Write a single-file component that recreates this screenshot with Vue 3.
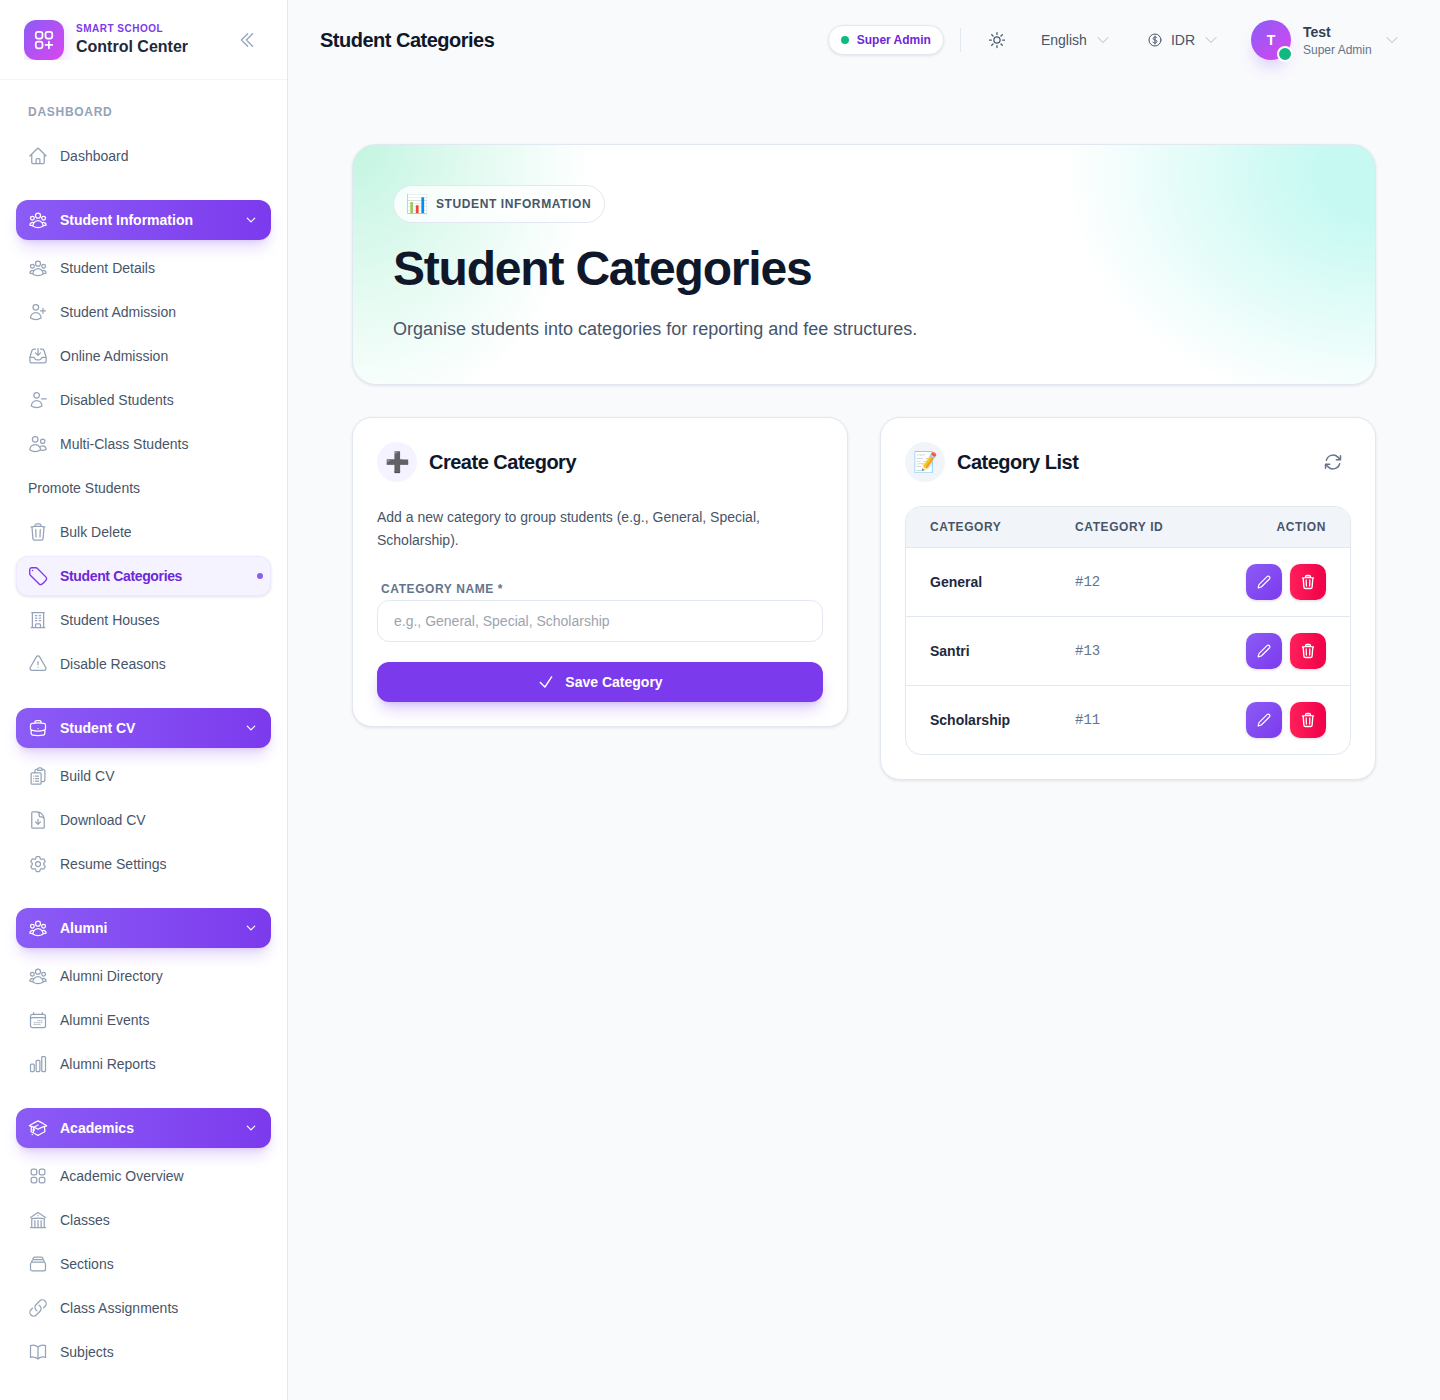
<script setup>
const P = {
  home: 'm2.25 12 8.954-8.955c.44-.439 1.152-.439 1.591 0L21.75 12M4.5 9.75v10.125c0 .621.504 1.125 1.125 1.125H9.75v-4.875c0-.621.504-1.125 1.125-1.125h2.25c.621 0 1.125.504 1.125 1.125V21h4.125c.621 0 1.125-.504 1.125-1.125V9.75M8.25 21h8.25',
  group: 'M18 18.72a9.094 9.094 0 0 0 3.741-.479 3 3 0 0 0-4.682-2.72m.94 3.198.001.031c0 .225-.012.447-.037.666A11.944 11.944 0 0 1 12 21c-2.17 0-4.207-.576-5.963-1.584A6.062 6.062 0 0 1 6 18.719m12 0a5.971 5.971 0 0 0-.941-3.197m0 0A5.995 5.995 0 0 0 12 12.75a5.995 5.995 0 0 0-5.058 2.772m0 0a3 3 0 0 0-4.681 2.72 8.986 8.986 0 0 0 3.74.477m.94-3.197a5.971 5.971 0 0 0-.94 3.197M15 6.75a3 3 0 1 1-6 0 3 3 0 0 1 6 0Zm6 3a2.25 2.25 0 1 1-4.5 0 2.25 2.25 0 0 1 4.5 0Zm-13.5 0a2.25 2.25 0 1 1-4.5 0 2.25 2.25 0 0 1 4.5 0Z',
  userPlus: 'M18 7.5v3m0 0v3m0-3h3m-3 0h-3m-2.25-4.125a3.375 3.375 0 1 1-6.75 0 3.375 3.375 0 0 1 6.75 0ZM3 19.235v-.11a6.375 6.375 0 0 1 12.75 0v.109A12.318 12.318 0 0 1 9.374 21c-2.331 0-4.512-.645-6.374-1.766Z',
  userMinus: 'M22 10.5h-6m-2.25-4.125a3.375 3.375 0 1 1-6.75 0 3.375 3.375 0 0 1 6.75 0ZM4 19.235v-.11a6.375 6.375 0 0 1 12.75 0v.109A12.318 12.318 0 0 1 10.374 21c-2.331 0-4.512-.645-6.374-1.766Z',
  users: 'M15 19.128a9.38 9.38 0 0 0 2.625.372 9.337 9.337 0 0 0 4.121-.952 4.125 4.125 0 0 0-7.533-2.493M15 19.128v-.003c0-1.113-.285-2.16-.786-3.07M15 19.128v.106A12.318 12.318 0 0 1 8.624 21c-2.331 0-4.512-.645-6.374-1.766l-.001-.109a6.375 6.375 0 0 1 11.964-3.07M12 6.375a3.375 3.375 0 1 1-6.75 0 3.375 3.375 0 0 1 6.75 0Zm8.25 2.25a2.625 2.625 0 1 1-5.25 0 2.625 2.625 0 0 1 5.25 0Z',
  inbox: 'M9 3.75H6.912a2.25 2.25 0 0 0-2.15 1.588L2.35 13.177a2.25 2.25 0 0 0-.1.661V18a2.25 2.25 0 0 0 2.25 2.25h15A2.25 2.25 0 0 0 21.75 18v-4.162c0-.224-.034-.447-.1-.661L19.24 5.338a2.25 2.25 0 0 0-2.15-1.588H15M2.25 13.5h3.86a2.25 2.25 0 0 1 2.012 1.244l.256.512a2.25 2.25 0 0 0 2.013 1.244h3.218a2.25 2.25 0 0 0 2.013-1.244l.256-.512a2.25 2.25 0 0 1 2.013-1.244h3.859M12 3v8.25m0 0-3-3m3 3 3-3',
  trash: 'm14.74 9-.346 9m-4.788 0L9.26 9m9.968-3.21c.342.052.682.107 1.022.166m-1.022-.165L18.16 19.673a2.25 2.25 0 0 1-2.244 2.077H8.084a2.25 2.25 0 0 1-2.244-2.077L4.772 5.79m14.456 0a48.108 48.108 0 0 0-3.478-.397m-12 .562c.34-.059.68-.114 1.022-.165m0 0a48.11 48.11 0 0 1 3.478-.397m7.5 0v-.916c0-1.18-.91-2.164-2.09-2.201a51.964 51.964 0 0 0-3.32 0c-1.18.037-2.09 1.022-2.09 2.201v.916m7.5 0a48.667 48.667 0 0 0-7.5 0',
  tag: 'M9.568 3H5.25A2.25 2.25 0 0 0 3 5.25v4.318c0 .597.237 1.17.659 1.591l9.581 9.581c.699.699 1.78.872 2.607.33a18.095 18.095 0 0 0 5.223-5.223c.542-.827.369-1.908-.33-2.607L11.16 3.66A2.25 2.25 0 0 0 9.568 3Z M6 6h.008v.008H6V6Z',
  building: 'M3.75 21h16.5M4.5 3h15M5.25 3v18m13.5-18v18M9 6.75h1.5m-1.5 3h1.5m-1.5 3h1.5m3-6H15m-1.5 3H15m-1.5 3H15M9 21v-3.375c0-.621.504-1.125 1.125-1.125h3.75c.621 0 1.125.504 1.125 1.125V21',
  warn: 'M12 9v3.75m-9.303 3.376c-.866 1.5.217 3.374 1.948 3.374h14.71c1.73 0 2.813-1.874 1.948-3.374L13.949 3.378c-.866-1.5-3.032-1.5-3.898 0L2.697 16.126ZM12 15.75h.007v.008H12v-.008Z',
  case: 'M20.25 14.15v4.25c0 1.094-.787 2.036-1.872 2.18-2.087.277-4.216.42-6.378.42s-4.291-.143-6.378-.42c-1.085-.144-1.872-1.086-1.872-2.18v-4.25m16.5 0a2.18 2.18 0 0 0 .75-1.661V8.706c0-1.081-.768-2.015-1.837-2.175a48.114 48.114 0 0 0-3.413-.387m4.5 8.006c-.194.165-.42.295-.673.38A23.978 23.978 0 0 1 12 15.75c-2.648 0-5.195-.429-7.577-1.22a2.016 2.016 0 0 1-.673-.38m0 0A2.18 2.18 0 0 1 3 12.489V8.706c0-1.081.768-2.015 1.837-2.175a48.111 48.111 0 0 1 3.413-.387m7.5 0V5.25A2.25 2.25 0 0 0 13.5 3h-3a2.25 2.25 0 0 0-2.25 2.25v.894m7.5 0a48.667 48.667 0 0 0-7.5 0M12 12.75h.008v.008H12v-.008Z',
  clip: 'M9 12h3.75M9 15h3.75M9 18h3.75m3 .75H18a2.25 2.25 0 0 0 2.25-2.25V6.108c0-1.135-.845-2.098-1.976-2.192a48.424 48.424 0 0 0-1.123-.08m-5.801 0c-.065.21-.1.433-.1.664 0 .414.336.75.75.75h4.5a.75.75 0 0 0 .75-.75 2.25 2.25 0 0 0-.1-.664m-5.8 0A2.251 2.251 0 0 1 13.5 2.25H15c1.012 0 1.867.668 2.15 1.586m-5.8 0c-.376.023-.75.05-1.124.08C9.095 4.01 8.25 4.973 8.25 6.108V8.25m0 0H4.875c-.621 0-1.125.504-1.125 1.125v11.25c0 .621.504 1.125 1.125 1.125h9.75c.621 0 1.125-.504 1.125-1.125V9.375c0-.621-.504-1.125-1.125-1.125H8.25ZM6.75 12h.008v.008H6.75V12Zm0 3h.008v.008H6.75V15Zm0 3h.008v.008H6.75V18Z',
  docDown: 'M19.5 14.25v-2.625a3.375 3.375 0 0 0-3.375-3.375h-1.5A1.125 1.125 0 0 1 13.5 7.125v-1.5a3.375 3.375 0 0 0-3.375-3.375H8.25m.75 12 3 3m0 0 3-3m-3 3v-6m-1.5-9H5.625c-.621 0-1.125.504-1.125 1.125v17.25c0 .621.504 1.125 1.125 1.125h12.75c.621 0 1.125-.504 1.125-1.125V11.25a9 9 0 0 0-9-9Z',
  cog: 'M9.594 3.94c.09-.542.56-.94 1.11-.94h2.593c.55 0 1.02.398 1.11.94l.213 1.281c.063.374.313.686.645.87.074.04.147.083.22.127.325.196.72.257 1.075.124l1.217-.456a1.125 1.125 0 0 1 1.37.49l1.296 2.247a1.125 1.125 0 0 1-.26 1.431l-1.003.827c-.293.241-.438.613-.43.992a7.723 7.723 0 0 1 0 .255c-.008.378.137.75.43.991l1.004.827c.424.35.534.955.26 1.43l-1.298 2.247a1.125 1.125 0 0 1-1.369.491l-1.217-.456c-.355-.133-.75-.072-1.076.124a6.47 6.47 0 0 1-.22.128c-.331.183-.581.495-.644.869l-.213 1.281c-.09.543-.56.94-1.11.94h-2.594c-.55 0-1.019-.398-1.11-.94l-.213-1.281c-.062-.374-.312-.686-.644-.87a6.52 6.52 0 0 1-.22-.127c-.325-.196-.72-.257-1.076-.124l-1.217.456a1.125 1.125 0 0 1-1.369-.49l-1.297-2.247a1.125 1.125 0 0 1 .26-1.431l1.004-.827c.292-.24.437-.613.43-.991a6.932 6.932 0 0 1 0-.255c.007-.38-.138-.751-.43-.992l-1.004-.827a1.125 1.125 0 0 1-.26-1.43l1.297-2.247a1.125 1.125 0 0 1 1.37-.491l1.216.456c.356.133.751.072 1.076-.124.072-.044.146-.086.22-.128.332-.183.582-.495.644-.869l.214-1.28Z M15 12a3 3 0 1 1-6 0 3 3 0 0 1 6 0Z',
  cal: 'M6.75 3v2.25M17.25 3v2.25M3 18.75V7.5a2.25 2.25 0 0 1 2.25-2.25h13.5A2.25 2.25 0 0 1 21 7.5v11.25m-18 0A2.25 2.25 0 0 0 5.25 21h13.5A2.25 2.25 0 0 0 21 18.75m-18 0v-7.5A2.25 2.25 0 0 1 5.25 9h13.5A2.25 2.25 0 0 1 21 11.25v7.5m-9-6h.008v.008H12v-.008ZM12 15h.008v.008H12V15Zm0 2.25h.008v.008H12v-.008ZM9.75 15h.008v.008H9.75V15Zm0 2.25h.008v.008H9.75v-.008ZM7.5 15h.008v.008H7.5V15Zm0 2.25h.008v.008H7.5v-.008Zm6.75-4.5h.008v.008h-.008v-.008Zm0 2.25h.008v.008h-.008V15Zm0 2.25h.008v.008h-.008v-.008Zm2.25-4.5h.008v.008H16.5v-.008Zm0 2.25h.008v.008H16.5V15Z',
  bars: 'M3 13.125C3 12.504 3.504 12 4.125 12h2.25c.621 0 1.125.504 1.125 1.125v6.75C7.5 20.496 6.996 21 6.375 21h-2.25A1.125 1.125 0 0 1 3 19.875v-6.75ZM9.75 8.625c0-.621.504-1.125 1.125-1.125h2.25c.621 0 1.125.504 1.125 1.125v11.25c0 .621-.504 1.125-1.125 1.125h-2.25a1.125 1.125 0 0 1-1.125-1.125V8.625ZM16.5 4.125c0-.621.504-1.125 1.125-1.125h2.25C20.496 3 21 3.504 21 4.125v15.75c0 .621-.504 1.125-1.125 1.125h-2.25a1.125 1.125 0 0 1-1.125-1.125V4.125Z',
  cap: 'M4.26 10.147a60.438 60.438 0 0 0-.491 6.347A48.62 48.62 0 0 1 12 20.904a48.62 48.62 0 0 1 8.232-4.41 60.46 60.46 0 0 0-.491-6.347m-15.482 0a50.636 50.636 0 0 0-2.658-.813A59.906 59.906 0 0 1 12 3.493a59.903 59.903 0 0 1 10.399 5.84c-.896.248-1.783.52-2.658.814m-15.482 0A50.717 50.717 0 0 1 12 13.489a50.702 50.702 0 0 1 7.74-3.342M6.75 15a.75.75 0 1 0 0-1.5.75.75 0 0 0 0 1.5Zm0 0v-3.675A55.378 55.378 0 0 1 12 8.443m-7.007 11.55A5.981 5.981 0 0 0 6.75 15.75v-1.5',
  grid: 'M3.75 6A2.25 2.25 0 0 1 6 3.75h2.25A2.25 2.25 0 0 1 10.5 6v2.25a2.25 2.25 0 0 1-2.25 2.25H6a2.25 2.25 0 0 1-2.25-2.25V6ZM3.75 15.75A2.25 2.25 0 0 1 6 13.5h2.25a2.25 2.25 0 0 1 2.25 2.25V18a2.25 2.25 0 0 1-2.25 2.25H6A2.25 2.25 0 0 1 3.75 18v-2.25ZM13.5 6a2.25 2.25 0 0 1 2.25-2.25H18A2.25 2.25 0 0 1 20.25 6v2.25A2.25 2.25 0 0 1 18 10.5h-2.25a2.25 2.25 0 0 1-2.25-2.25V6ZM13.5 15.75a2.25 2.25 0 0 1 2.25-2.25H18a2.25 2.25 0 0 1 2.25 2.25V18A2.25 2.25 0 0 1 18 20.25h-2.25A2.25 2.25 0 0 1 13.5 18v-2.25Z',
  squaresPlus: 'M13.5 16.875h3.375m0 0h3.375m-3.375 0V13.5m0 3.375v3.375M6 10.5h2.25a2.25 2.25 0 0 0 2.25-2.25V6a2.25 2.25 0 0 0-2.25-2.25H6A2.25 2.25 0 0 0 3.75 6v2.25A2.25 2.25 0 0 0 6 10.5Zm0 9.75h2.25A2.25 2.25 0 0 0 10.5 18v-2.25a2.25 2.25 0 0 0-2.25-2.25H6a2.25 2.25 0 0 0-2.25 2.25V18A2.25 2.25 0 0 0 6 20.25Zm9.75-9.75H18a2.25 2.25 0 0 0 2.25-2.25V6A2.25 2.25 0 0 0 18 3.75h-2.25A2.25 2.25 0 0 0 13.5 6v2.25a2.25 2.25 0 0 0 2.25 2.25Z',
  library: 'M12 21v-8.25M15.75 21v-8.25M8.25 21v-8.25M3 9l9-6 9 6m-1.5 12V10.332A48.36 48.36 0 0 0 12 9.75c-2.551 0-5.056.2-7.5.582V21M3 21h18M12 6.75h.008v.008H12V6.75Z',
  stack: 'M6 6.878V6a2.25 2.25 0 0 1 2.25-2.25h7.5A2.25 2.25 0 0 1 18 6v.878m-12 0c.235-.083.487-.128.75-.128h10.5c.263 0 .515.045.75.128m-12 0A2.25 2.25 0 0 0 4.5 9v.878m13.5-3A2.25 2.25 0 0 1 19.5 9v.878m0 0a2.246 2.246 0 0 0-.75-.128H5.25c-.263 0-.515.045-.75.128m15 0A2.25 2.25 0 0 1 21 12v6a2.25 2.25 0 0 1-2.25 2.25H5.25A2.25 2.25 0 0 1 3 18v-6c0-.98.626-1.813 1.5-2.122',
  link: 'M13.19 8.688a4.5 4.5 0 0 1 1.242 7.244l-4.5 4.5a4.5 4.5 0 0 1-6.364-6.364l1.757-1.757m13.35-.622 1.757-1.757a4.5 4.5 0 0 0-6.364-6.364l-4.5 4.5a4.5 4.5 0 0 0 1.242 7.244',
  book: 'M12 6.042A8.967 8.967 0 0 0 6 3.75c-1.052 0-2.062.18-3 .512v14.25A8.987 8.987 0 0 1 6 18c2.305 0 4.408.867 6 2.292m0-14.25a8.966 8.966 0 0 1 6-2.292c1.052 0 2.062.18 3 .512v14.25A8.987 8.987 0 0 0 18 18a8.967 8.967 0 0 0-6 2.292m0-14.25v14.25',
  sun: 'M12 3v2.25m6.364.386-1.591 1.591M21 12h-2.25m-.386 6.364-1.591-1.591M12 18.75V21m-4.773-4.227-1.591 1.591M5.25 12H3m4.227-4.773L5.636 5.636M15.75 12a3.75 3.75 0 1 1-7.5 0 3.75 3.75 0 0 1 7.5 0Z',
  dollar: 'M12 6v12m-3-2.818.879.659c1.171.879 3.07.879 4.242 0 1.172-.879 1.172-2.303 0-3.182C13.536 12.219 12.768 12 12 12c-.725 0-1.45-.22-2.003-.659-1.106-.879-1.106-2.303 0-3.182s2.9-.879 4.006 0l.415.33M21 12a9 9 0 1 1-18 0 9 9 0 0 1 18 0Z',
  chev: 'm19.5 8.25-7.5 7.5-7.5-7.5',
  dbl: 'm18.75 4.5-7.5 7.5 7.5 7.5m-6-15L5.25 12l7.5 7.5',
  check: 'm4.5 12.75 6 6 9-13.5',
  pencil: 'M21.174 6.812a1 1 0 0 0-3.986-3.987L3.842 16.174a2 2 0 0 0-.5.83l-1.321 4.352a.5.5 0 0 0 .623.622l4.353-1.32a2 2 0 0 0 .83-.497z',
  refresh: 'M16.023 9.348h4.992v-.001M2.985 19.644v-4.992m0 0h4.992m-4.993 0 3.181 3.183a8.25 8.25 0 0 0 13.803-3.7M4.031 9.865a8.25 8.25 0 0 1 13.803-3.7l3.181 3.182m0-4.991v4.99'
}

const groups = [
  { head: 'Student Information', icon: 'group', items: [
    { t: 'Student Details', i: 'group' }, { t: 'Student Admission', i: 'userPlus' }, { t: 'Online Admission', i: 'inbox' },
    { t: 'Disabled Students', i: 'userMinus' }, { t: 'Multi-Class Students', i: 'users' }, { t: 'Promote Students' },
    { t: 'Bulk Delete', i: 'trash' }, { t: 'Student Categories', i: 'tag', active: true }, { t: 'Student Houses', i: 'building' },
    { t: 'Disable Reasons', i: 'warn' } ] },
  { head: 'Student CV', icon: 'case', items: [
    { t: 'Build CV', i: 'clip' }, { t: 'Download CV', i: 'docDown' }, { t: 'Resume Settings', i: 'cog' } ] },
  { head: 'Alumni', icon: 'group', items: [
    { t: 'Alumni Directory', i: 'group' }, { t: 'Alumni Events', i: 'cal' }, { t: 'Alumni Reports', i: 'bars' } ] },
  { head: 'Academics', icon: 'cap', items: [
    { t: 'Academic Overview', i: 'grid' }, { t: 'Classes', i: 'library' }, { t: 'Sections', i: 'stack' },
    { t: 'Class Assignments', i: 'link' }, { t: 'Subjects', i: 'book' } ] }
]
const rows = [
  { name: 'General', id: '#12' },
  { name: 'Santri', id: '#13' },
  { name: 'Scholarship', id: '#11' }
]
</script>

<template>
  <div class="app">
    <aside class="side">
      <div class="brand">
        <div class="logo-clip">
          <div class="logo">
            <svg class="ic24" viewBox="0 0 24 24"><path :d="P.squaresPlus" /></svg>
          </div>
        </div>
        <div class="brand-text">
          <div class="brand-top">SMART SCHOOL</div>
          <div class="brand-name">Control Center</div>
        </div>
        <svg class="collapse" viewBox="0 0 24 24"><path :d="P.dbl" /></svg>
      </div>
      <nav class="nav">
        <div class="sec">DASHBOARD</div>
        <a class="item">
          <svg class="ic" viewBox="0 0 24 24"><path :d="P.home" /></svg>
          <span>Dashboard</span>
        </a>
        <div v-for="g in groups" :key="g.head" class="group">
          <div class="ghead">
            <svg class="ic" viewBox="0 0 24 24"><path :d="P[g.icon]" /></svg>
            <span class="gtitle">{{ g.head }}</span>
            <svg class="gchev" viewBox="0 0 24 24"><path :d="P.chev" /></svg>
          </div>
          <div class="gitems">
            <a v-for="it in g.items" :key="it.t" class="item" :class="{ active: it.active, bare: !it.i }">
              <svg v-if="it.i" class="ic" viewBox="0 0 24 24"><path :d="P[it.i]" /></svg>
              <span>{{ it.t }}</span>
              <i v-if="it.active" class="dot"></i>
            </a>
          </div>
        </div>
      </nav>
    </aside>

    <div class="main">
      <header class="top">
        <h1 class="top-title">Student Categories</h1>
        <div class="top-right">
          <div class="pill"><i class="gdot"></i>Super Admin</div>
          <i class="vline"></i>
          <svg class="sun" viewBox="0 0 24 24"><path :d="P.sun" /></svg>
          <div class="sel lang">English<svg class="tchev" viewBox="0 0 24 24"><path :d="P.chev" /></svg></div>
          <div class="sel cur">
            <svg class="dollar" viewBox="0 0 24 24"><path :d="P.dollar" /></svg>IDR<svg class="tchev" viewBox="0 0 24 24"><path :d="P.chev" /></svg>
          </div>
          <div class="user">
            <div class="avatar">T<i class="online"></i></div>
            <div class="who">
              <div class="who-name">Test</div>
              <div class="who-role">Super Admin</div>
            </div>
            <svg class="tchev uchev" viewBox="0 0 24 24"><path :d="P.chev" /></svg>
          </div>
        </div>
      </header>

      <main class="content">
        <section class="hero">
          <div class="badge"><span class="badge-emoji">📊</span>STUDENT INFORMATION</div>
          <h2 class="hero-title">Student Categories</h2>
          <p class="hero-sub">Organise students into categories for reporting and fee structures.</p>
        </section>

        <div class="cols">
          <section class="card">
            <div class="card-head">
              <div class="circle violet">➕</div>
              <h3>Create Category</h3>
            </div>
            <p class="desc">Add a new category to group students (e.g., General, Special, Scholarship).</p>
            <label class="flabel" for="catname">CATEGORY NAME *</label>
            <input id="catname" class="finput" placeholder="e.g., General, Special, Scholarship" />
            <button class="save" type="button">
              <svg class="savecheck" viewBox="0 0 24 24"><path :d="P.check" /></svg>Save Category
            </button>
          </section>

          <section class="card">
            <div class="card-head">
              <div class="circle slate">📝</div>
              <h3>Category List</h3>
              <svg class="refresh" viewBox="0 0 24 24"><path :d="P.refresh" /></svg>
            </div>
            <div class="tbl">
              <div class="row thead">
                <div class="c1">CATEGORY</div>
                <div class="c2">CATEGORY ID</div>
                <div class="c3">ACTION</div>
              </div>
              <div v-for="r in rows" :key="r.id" class="row tr">
                <div class="c1 name">{{ r.name }}</div>
                <div class="c2 mono">{{ r.id }}</div>
                <div class="c3 acts">
                  <button class="act edit" type="button"><svg viewBox="0 0 24 24"><path :d="P.pencil" /></svg></button>
                  <button class="act del" type="button"><svg viewBox="0 0 24 24"><path :d="P.trash" /></svg></button>
                </div>
              </div>
            </div>
          </section>
        </div>
      </main>
    </div>
  </div>
</template>

<style>
html, body { margin: 0; background: #f8fafc; }
</style>

<style scoped>
.app {
  display: flex;
  height: 1400px;
  overflow: hidden;
  font-family: "Liberation Sans", Arial, sans-serif;
  background: #f9fafc;
}
svg { fill: none; stroke: currentColor; stroke-width: 1.5; stroke-linecap: round; stroke-linejoin: round; flex: none; display: block; }

/* sidebar */
.side { width: 288px; flex: none; box-sizing: border-box; background: #fff; border-right: 1px solid #e2e8f0; }
.brand { height: 80px; box-sizing: border-box; border-bottom: 1px solid #f1f5f9; display: flex; align-items: center; padding: 0 24px; }
.logo-clip { width: 52px; height: 40px; overflow: hidden; flex: none; }
.logo { width: 40px; height: 40px; border-radius: 12px; background: linear-gradient(135deg, #8b5cf6, #d946ef); color: #fff; display: flex; align-items: center; justify-content: center; box-shadow: 0 4px 14px rgba(168, 85, 247, .25); }
.ic24 { width: 24px; height: 24px; stroke-width: 1.75; }
.brand-text { flex: 1; }
.brand-top { font-size: 10px; line-height: 14px; font-weight: 700; letter-spacing: .5px; color: #7c3aed; }
.brand-name { font-size: 16px; line-height: 22px; font-weight: 700; color: #1e293b; }
.collapse { width: 20px; height: 20px; color: #94a3b8; margin-right: 6px; }
.nav { padding: 24px 16px 0; }
.sec { font-size: 12px; line-height: 16px; font-weight: 700; letter-spacing: .72px; color: #94a3b8; padding-left: 12px; margin-bottom: 16px; }
.item { display: flex; align-items: center; height: 40px; padding: 0 12px; gap: 12px; border-radius: 12px; font-size: 14px; color: #475569; box-sizing: border-box; }
.ic { width: 20px; height: 20px; color: #94a3b8; }
.group { margin-top: 24px; }
.ghead { display: flex; align-items: center; height: 40px; padding: 0 12px; gap: 12px; border-radius: 12px; background: linear-gradient(90deg, #8b5cf6, #7c3aed); color: #fff; font-size: 14px; font-weight: 700; box-shadow: 0 10px 15px -3px rgba(124, 58, 237, .2), 0 4px 6px -4px rgba(124, 58, 237, .2); }
.ghead .ic { color: #fff; }
.gtitle { flex: 1; }
.gchev { width: 12px; height: 12px; stroke-width: 2.4; margin-right: 2px; }
.gitems { display: flex; flex-direction: column; gap: 4px; margin-top: 8px; }
.item.active { background: #f5f3ff; color: #6d28d9; font-weight: 700; letter-spacing: -.35px; box-shadow: 0 1px 3px rgba(15, 23, 42, .12); border: 1px solid #ede9fe; padding: 0 11px; }
.item.active .ic { color: #7c3aed; transform: scale(1.1); }
.item.active span { flex: 1; }
.dot { width: 6px; height: 6px; border-radius: 50%; background: #8b5cf6; margin-right: -4px; }

/* top */
.main { flex: 1; min-width: 0; }
.top { height: 80px; box-sizing: border-box; display: flex; align-items: center; justify-content: space-between; padding: 0 32px; }
.top-title { margin: 0; font-size: 20px; line-height: 28px; font-weight: 700; letter-spacing: -.5px; color: #0f172a; }
.top-right { display: flex; align-items: center; }
.pill { display: flex; align-items: center; height: 30px; box-sizing: border-box; padding: 0 12px; gap: 8px; border-radius: 15px; background: #fff; border: 1px solid #e2e8f0; box-shadow: 0 1px 3px rgba(15, 23, 42, .1); font-size: 12px; font-weight: 700; color: #6d28d9; }
.gdot { width: 8px; height: 8px; border-radius: 50%; background: #10b981; }
.vline { width: 1px; height: 24px; background: #e2e8f0; margin: 0 26px 0 16px; }
.sun { width: 20px; height: 20px; color: #475569; }
.sel { display: flex; align-items: center; font-size: 14px; color: #475569; }
.lang { margin-left: 34px; }
.cur { margin-left: 36px; }
.tchev { width: 16px; height: 16px; color: #b0bac9; margin-left: 8px; stroke-width: 1.5; }
.dollar { width: 16px; height: 16px; margin-right: 8px; color: #475569; }
.user { display: flex; align-items: center; margin-left: 32px; }
.avatar { width: 40px; height: 40px; border-radius: 50%; position: relative; background: linear-gradient(135deg, #8b5cf6, #d946ef); color: #fff; display: flex; align-items: center; justify-content: center; font-size: 14px; font-weight: 700; box-shadow: 0 10px 15px -3px rgba(139, 92, 246, .25); }
.online { position: absolute; right: -2px; bottom: -2px; width: 12px; height: 12px; border-radius: 50%; background: #10b981; border: 2px solid #fff; }
.who { margin-left: 12px; width: 74px; }
.who-name { font-size: 14px; line-height: 20px; font-weight: 700; color: #334155; }
.who-role { font-size: 12px; line-height: 16px; color: #64748b; }
.uchev { margin-left: 7px; margin-right: 8px; }

/* content */
.content { padding: 64px 64px 0; }
.hero { box-sizing: border-box; height: 241px; padding: 40px; border: 1px solid #e2e8f0; border-radius: 24px; background:
  radial-gradient(ellipse 240px 280px at 0 0, rgba(110, 231, 183, .42), rgba(110, 231, 183, .2) 50%, rgba(110, 231, 183, 0) 100%),
  radial-gradient(ellipse 310px 240px at 100% 12%, #c6f9f2 0%, #c6f9f2 18%, rgba(198, 249, 242, 0) 100%),
  #fff;
  box-shadow: 0 1px 3px rgba(15, 23, 42, .1); }
.badge { display: inline-flex; align-items: center; height: 38px; box-sizing: border-box; padding: 0 13px 0 12px; gap: 8px; border: 1px solid #e2e8f0; border-radius: 19px; background: rgba(255, 255, 255, .8); font-size: 12px; font-weight: 700; letter-spacing: .6px; color: #475569; }
.badge-emoji { font-size: 18px; letter-spacing: 0; font-weight: 400; }
.hero-title { margin: 16px 0 0; font-size: 48px; line-height: 60px; font-weight: 700; letter-spacing: -1.2px; color: #0f172a; }
.hero-sub { margin: 16px 0 0; font-size: 18px; line-height: 28px; color: #475569; }
.cols { display: flex; gap: 32px; align-items: flex-start; margin-top: 32px; }
.card { flex: 1 1 0; min-width: 0; box-sizing: border-box; padding: 24px; background: #fff; border: 1px solid #e2e8f0; border-radius: 20px; box-shadow: 0 1px 3px rgba(15, 23, 42, .1); }
.card-head { display: flex; align-items: center; gap: 12px; height: 40px; }
.card-head h3 { margin: 0; flex: 1; font-size: 20px; line-height: 28px; font-weight: 700; letter-spacing: -.5px; color: #0f172a; }
.circle { width: 40px; height: 40px; border-radius: 50%; display: flex; align-items: center; justify-content: center; font-size: 20px; color: #64748b; flex: none; }
.circle.violet { background: #f5f3ff; }
.circle.slate { background: #f1f5f9; }
.desc { margin: 24px 0 0; font-size: 14px; line-height: 23px; color: #475569; }
.flabel { display: block; margin: 29px 0 0; padding-left: 4px; font-size: 12px; line-height: 16px; font-weight: 700; letter-spacing: .6px; color: #64748b; }
.finput { display: block; width: 100%; box-sizing: border-box; height: 42px; margin-top: 3px; padding: 0 16px; border: 1px solid #e2e8f0; border-radius: 12px; background: #fff; font: 14px "Liberation Sans", Arial, sans-serif; color: #334155; outline: none; }
.finput::placeholder { color: #9ca3af; }
.save { display: flex; align-items: center; justify-content: center; gap: 10px; width: 100%; height: 40px; margin-top: 20px; border: 0; border-radius: 12px; background: #7c3aed; color: #fff; font: 700 14px "Liberation Sans", Arial, sans-serif; box-shadow: 0 10px 15px -3px rgba(124, 58, 237, .25), 0 4px 6px -4px rgba(124, 58, 237, .25); }
.savecheck { width: 18px; height: 18px; stroke-width: 2; }
.refresh { width: 20px; height: 20px; color: #64748b; margin-right: 8px; stroke-width: 1.75; }
.tbl { margin-top: 24px; border: 1px solid #e2e8f0; border-radius: 16px; overflow: hidden; }
.row { display: flex; align-items: center; padding: 0 24px; }
.thead { height: 40px; background: #f1f5f9; border-bottom: 1px solid #e2e8f0; font-size: 12px; font-weight: 700; letter-spacing: .6px; color: #475569; }
.tr { height: 68px; }
.tr + .tr { border-top: 1px solid #e2e8f0; }
.c1 { width: 145px; flex: none; }
.c2 { flex: 1; }
.c3 { text-align: right; }
.name { font-size: 14px; font-weight: 700; color: #1e293b; }
.mono { font-family: "Liberation Mono", monospace; font-size: 14px; color: #64748b; }
.acts { display: flex; gap: 8px; }
.act { width: 36px; height: 36px; padding: 0; border: 0; border-radius: 10px; color: #fff; display: flex; align-items: center; justify-content: center; box-shadow: 0 1px 3px rgba(15, 23, 42, .15); }
.act.edit svg { width: 14px; height: 14px; stroke-width: 2; }
.act.del svg { width: 16px; height: 16px; stroke-width: 2; }
.act.edit { background: linear-gradient(135deg, #8b5cf6, #7c3aed); }
.act.del { background: linear-gradient(90deg, #ff1f5a, #f00048); }
</style>
